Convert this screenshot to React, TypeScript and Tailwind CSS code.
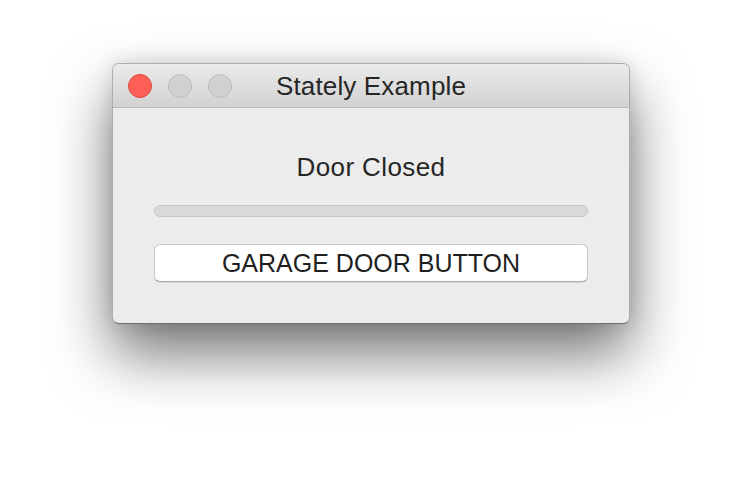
export default function App() {
  return (
    <div className="w-[742px] h-[484px] bg-white flex justify-center pt-[63px] font-['Liberation_Sans',Arial,sans-serif] text-[#262626]">
      {/* window */}
      <div className="w-[518px] h-[261px] flex flex-col rounded-[7px] border border-[#adadad] border-b-[#6f6f6f] bg-[#ececec] overflow-hidden shadow-[0_0_18px_rgba(0,0,0,0.12),0_30px_60px_rgba(0,0,0,0.55)]">
        {/* title bar */}
        <div className="h-[44px] shrink-0 grid grid-cols-[1fr_auto_1fr] items-center px-[15px] border-b border-[#b9b9b9] bg-gradient-to-b from-[#ebebeb] to-[#d2d2d2]">
          <div className="flex items-center gap-[16px]">
            <span className="w-[24px] h-[24px] rounded-full bg-[#fe5f57] border border-[#e0473f]" />
            <span className="w-[24px] h-[24px] rounded-full bg-[#d1d1d1] border border-[#bcbcbc]" />
            <span className="w-[24px] h-[24px] rounded-full bg-[#d1d1d1] border border-[#bcbcbc]" />
          </div>
          <div className="text-[26px] leading-[30px] tracking-[0.15px] pt-[1px]">Stately Example</div>
          <div />
        </div>

        {/* content */}
        <div className="flex-1 flex flex-col px-[41px] pt-[44px]">
          <div className="text-[26px] leading-[30px] tracking-[0.4px] text-center">Door Closed</div>
          <div className="mt-[23px] h-[12px] rounded-full bg-[#d9d9d9] border border-[#c6c6c6]" />
          <button className="mt-[27px] h-[38px] rounded-[6px] bg-white border border-[#c8c8c8] border-b-[#ababab] shadow-[0_1px_1px_rgba(0,0,0,0.08)] text-[25px] leading-[30px] text-[#1f1f1f]">
            GARAGE DOOR BUTTON
          </button>
        </div>
      </div>
    </div>
  );
}
